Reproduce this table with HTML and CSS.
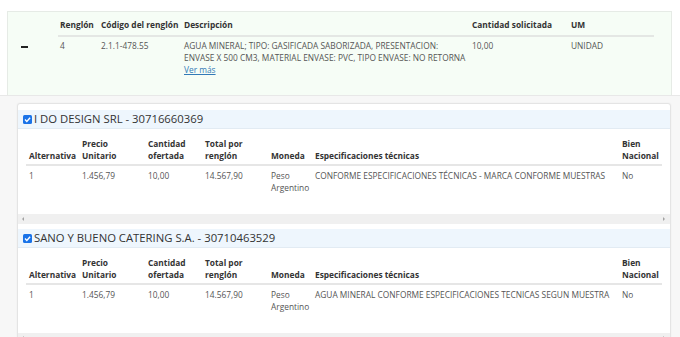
FILE: index.html
```html
<!DOCTYPE html>
<html lang="es">
<head>
<meta charset="utf-8">
<link rel="stylesheet" href="styles.css">
</head>
<body>
<div class="item-panel">
  <div class="toggle"><span class="minus"></span></div>
  <table class="item-table">
    <colgroup><col class="c1"><col class="c2"><col class="c3"><col class="c4"><col class="c5"></colgroup>
    <thead>
      <tr><th>Renglón</th><th>Código del renglón</th><th>Descripción</th><th>Cantidad solicitada</th><th>UM</th></tr>
    </thead>
    <tbody>
      <tr>
        <td>4</td>
        <td>2.1.1-478.55</td>
        <td>AGUA MINERAL; TIPO: GASIFICADA SABORIZADA, PRESENTACION: ENVASE X 500 CM3, MATERIAL ENVASE: PVC, TIPO ENVASE: NO RETORNA<br><a href="#" class="more">Ver más</a></td>
        <td>10,00</td>
        <td>UNIDAD</td>
      </tr>
    </tbody>
  </table>
</div>
<div class="detail">
  <div class="card">
    <section class="offer">
      <div class="offer-head"><span class="check"><svg viewBox="0 0 9 9" width="9" height="9"><rect x="0" y="0" width="9" height="9" rx="1.5" fill="#1a73e8"/><path d="M2 4.6 L3.8 6.4 L7.1 2.7" fill="none" stroke="#fff" stroke-width="1.4"/></svg></span>I DO DESIGN SRL - 30716660369</div>
      <div class="scroll-area">
        <table class="offer-table">
          <colgroup><col class="o1"><col class="o2"><col class="o3"><col class="o4"><col class="o5"><col class="o6"><col class="o7"></colgroup>
          <thead>
            <tr><th>Alternativa</th><th>Precio Unitario</th><th>Cantidad ofertada</th><th>Total por renglón</th><th>Moneda</th><th>Especificaciones técnicas</th><th>Bien Nacional</th></tr>
          </thead>
          <tbody>
            <tr><td>1</td><td>1.456,79</td><td>10,00</td><td>14.567,90</td><td>Peso Argentino</td><td>CONFORME ESPECIFICACIONES TÉCNICAS - MARCA CONFORME MUESTRAS</td><td>No</td></tr>
          </tbody>
        </table>
      </div>
      <div class="hscroll"><span class="arr-l"></span><span class="arr-r"></span></div>
    </section>
    <section class="offer">
      <div class="offer-head"><span class="check"><svg viewBox="0 0 9 9" width="9" height="9"><rect x="0" y="0" width="9" height="9" rx="1.5" fill="#1a73e8"/><path d="M2 4.6 L3.8 6.4 L7.1 2.7" fill="none" stroke="#fff" stroke-width="1.4"/></svg></span>SANO Y BUENO CATERING S.A. - 30710463529</div>
      <div class="scroll-area">
        <table class="offer-table">
          <colgroup><col class="o1"><col class="o2"><col class="o3"><col class="o4"><col class="o5"><col class="o6"><col class="o7"></colgroup>
          <thead>
            <tr><th>Alternativa</th><th>Precio Unitario</th><th>Cantidad ofertada</th><th>Total por renglón</th><th>Moneda</th><th>Especificaciones técnicas</th><th>Bien Nacional</th></tr>
          </thead>
          <tbody>
            <tr><td>1</td><td>1.456,79</td><td>10,00</td><td>14.567,90</td><td>Peso Argentino</td><td>AGUA MINERAL CONFORME ESPECIFICACIONES TECNICAS SEGUN MUESTRA</td><td>No</td></tr>
          </tbody>
        </table>
      </div>
      <div class="hscroll"><span class="arr-l"></span><span class="arr-r"></span></div>
    </section>
  </div>
</div>
</body>
</html>
```
FILE: styles.css
```css
html, body {
  margin: 0;
  padding: 0;
  background: #ffffff;
  font-family: "Open Sans", "Noto Sans", sans-serif;
  font-size: 8.35px;
  line-height: 12px;
  color: #555;
  overflow: hidden;
  height: 337px;
}

.item-panel {
  margin: 11px 8px 0 7px;
  height: 83px;
  border: 1px solid #e6ebe6;
  border-bottom: none;
  background: #f6fdf6;
  display: flex;
}

.toggle {
  width: 50px;
  padding-top: 34px;
  box-sizing: border-box;
}

.minus {
  display: block;
  width: 7px;
  height: 2px;
  margin-left: 13px;
  background: #222;
}

table {
  border-collapse: collapse;
  table-layout: fixed;
}

.item-table {
  width: 596px;
  margin-top: 7px;
  align-self: flex-start;
}

.item-table .c1 { width: 41px; }
.item-table .c2 { width: 83px; }
.item-table .c3 { width: 288px; }
.item-table .c4 { width: 99px; }
.item-table .c5 { width: 85px; }

th {
  font-weight: 700;
  color: #333;
  text-align: left;
  vertical-align: bottom;
}

td {
  vertical-align: top;
  text-align: left;
}

.item-table th {
  padding: 0 2px 4px;
  border-bottom: 2px solid #e4e7e4;
}

.item-table td {
  padding: 3px 2px 0;
}

.more {
  color: #337ab7;
  text-decoration: underline;
}

.detail {
  background: #f7f7f7;
  border-top: 1px solid #e8e8e8;
  padding: 7px 9px 0 17px;
  height: 234px;
  overflow: hidden;
}

.card {
  background: #fff;
  border: 1px solid #e4e4e4;
  border-radius: 3px;
  box-shadow: 0 0 2px rgba(0,0,0,0.06);
  padding-top: 6px;
  height: 300px;
}

.offer + .offer {
  margin-top: 5px;
}

.offer-head {
  height: 18px;
  background: #eef6fd;
  border-bottom: 1px solid #e2ebf3;
  display: flex;
  align-items: center;
  padding-left: 5px;
  font-size: 11.3px;
  line-height: 18px;
  color: #333;
}

.check {
  display: inline-flex;
  margin-right: 2px;
}

.scroll-area {
  padding: 9px 8px 20px 8px;
}

.offer-table {
  width: 636px;
}

.offer-table .o1 { width: 53px; }
.offer-table .o2 { width: 66px; }
.offer-table .o3 { width: 57px; }
.offer-table .o4 { width: 66px; }
.offer-table .o5 { width: 44px; }
.offer-table .o6 { width: 307px; }
.offer-table .o7 { width: 43px; }

.offer-table th {
  padding: 0 3px 2px;
  border-bottom: 2px solid #e6e6e6;
}

.offer-table td {
  padding: 4px 3px 0;
}

.hscroll {
  height: 10px;
  background: #f0f0f0;
  display: flex;
  justify-content: space-between;
  align-items: center;
  padding: 0 5px 0 4px;
}

.arr-l, .arr-r {
  width: 0;
  height: 0;
  border-top: 2px solid transparent;
  border-bottom: 2px solid transparent;
}

.arr-l { border-right: 2px solid #a3a3a3; }
.arr-r { border-left: 2px solid #a3a3a3; }
```
